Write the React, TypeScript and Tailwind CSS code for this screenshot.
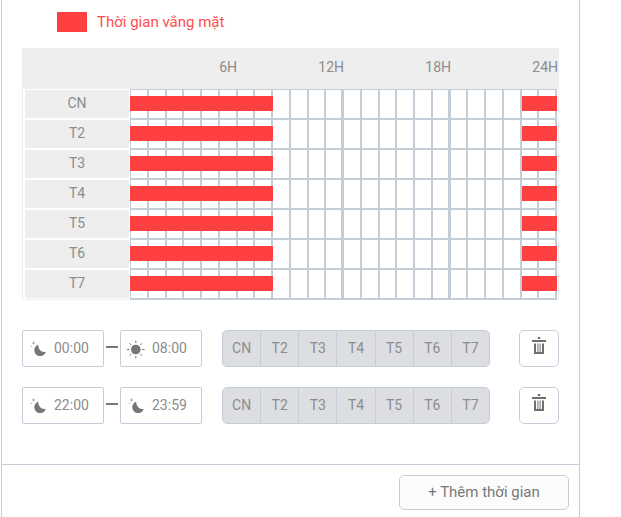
import React from 'react';

const days = ['CN', 'T2', 'T3', 'T4', 'T5', 'T6', 'T7'];
const hours = Array.from({ length: 24 }, (_, i) => i + 1);

const MoonIcon: React.FC = () => (
  <svg width="20" height="20" viewBox="0 0 20 20" className="shrink-0">
    <path d="M8.3 5.6a5.9 5.9 0 1 0 7.5 7.4 6.6 6.6 0 0 1-7.5-7.4z" fill="#777" />
    <path d="M3.5 2.6v2.8M2.1 4h2.8M0.8 7.5h1.2" stroke="#999" strokeWidth="0.8" fill="none" />
  </svg>
);

const SunIcon: React.FC = () => (
  <svg width="20" height="20" viewBox="0 0 20 20" className="shrink-0 overflow-visible">
    <circle cx="7.8" cy="10.5" r="4.8" fill="#777" />
    <path
      d="M7.8 1.6v2.4M7.8 17v2.4M-1 10.5h2.4M14.2 10.5h2.4M1.6 4.3l1.7 1.7M12.3 15l1.7 1.7M1.6 16.7l1.7-1.7M12.3 6l1.7-1.7"
      stroke="#777"
      strokeWidth="1"
      fill="none"
    />
  </svg>
);

const TrashIcon: React.FC = () => (
  <svg width="14" height="17" viewBox="0 0 14 17" className="mb-[7px]">
    <rect x="5.8" y="0" width="2.4" height="2" fill="#6f6f6f" />
    <rect x="0" y="3" width="14" height="2" fill="#6f6f6f" />
    <path d="M2 6.5h10V17H2zM4 6.5V15h1.4V6.5zM6.4 6.5V15h1.2V6.5zM8.6 6.5V15H10V6.5z" fill="#6f6f6f" fillRule="evenodd" />
  </svg>
);

const TimeBox: React.FC<{ icon: React.ReactNode; value: string }> = ({ icon, value }) => (
  <div className="w-[82px] h-[37px] flex items-center pl-[7px] gap-[4px] border border-[#c5ced8] rounded-[2px] text-sm text-[#8c8c8c]">
    {icon}
    <span className="pb-[2px]">{value}</span>
  </div>
);

const ScheduleRow: React.FC<{ from: React.ReactNode; fromValue: string; to: React.ReactNode; toValue: string }> = ({
  from,
  fromValue,
  to,
  toValue,
}) => (
  <div className="flex items-center">
    <TimeBox icon={from} value={fromValue} />
    <div className="w-[12px] h-[2px] bg-[#777] mx-[2px] mb-[3px]" />
    <TimeBox icon={to} value={toValue} />
    <div className="ml-[20px] w-[268px] h-[37px] flex bg-[#dcdee2] border border-[#c5ced8] rounded-[5px] text-sm text-[#8c8c8c]">
      {days.map((d, i) => (
        <div
          key={d}
          className={`flex-1 flex items-center justify-center pb-[2px] ${i < 6 ? 'border-r border-[#c5ced8]' : ''}`}
        >
          {d}
        </div>
      ))}
    </div>
    <button className="ml-[29px] w-[40px] h-[37px] flex items-center justify-center border border-[#c5ced8] rounded-[5px] bg-white">
      <TrashIcon />
    </button>
  </div>
);

export default function App() {
  return (
    <div className="w-[621px] h-[517px] bg-white overflow-hidden font-['Roboto',sans-serif]">
      <div className="w-[579px] h-full ml-px border-x border-[#c5ced8] flex flex-col">
        <div className="flex items-center h-[20px] mt-[12px] ml-[55px] gap-[10px]">
          <div className="w-[30px] h-[20px] bg-[#ff4040]" />
          <span className="text-[15px] text-[#ff4d4d]">Thời gian vắng mặt</span>
        </div>

        <div className="mt-[16px] ml-[20px] w-[537px] h-[252px] border-x border-b border-[#eeeeee]">
          <div className="h-[41px] bg-[#eeeeee] -mx-px relative text-sm text-[#8c8c8c]">
            <span className="absolute right-[322px] top-[9px]">6H</span>
            <span className="absolute right-[215px] top-[9px]">12H</span>
            <span className="absolute right-[108px] top-[9px]">18H</span>
            <span className="absolute right-[1px] top-[9px]">24H</span>
          </div>
          <div className="ml-[107px] w-[427px] h-px bg-[#c5ced8]" />
          {days.map((d) => (
            <div key={d} className="flex h-[30px]">
              <div className="ml-[2px] w-[104px] h-[28px] pb-[2px] bg-[#eeeeee] flex items-center justify-center text-sm text-[#8c8c8c]">
                {d}
              </div>
              <div className="ml-px w-[427px] relative grid grid-cols-[repeat(24,1fr)] border-l border-[#c5ced8]">
                {hours.map((h) => (
                  <div
                    key={h}
                    className={`border-b-2 border-[#c5ced8] ${
                      h === 12 || h === 18 ? 'border-r-[3px]' : 'border-r-2'
                    }`}
                  />
                ))}
                <div className="absolute -left-px top-[6px] w-[143px] h-[15px] bg-[#ff4040]" />
                <div className="absolute right-0 top-[6px] w-[35px] h-[15px] bg-[#ff4040]" />
              </div>
            </div>
          ))}
        </div>

        <div className="mt-[30px] ml-[20px] flex flex-col gap-[20px]">
          <ScheduleRow from={<MoonIcon />} fromValue="00:00" to={<SunIcon />} toValue="08:00" />
          <ScheduleRow from={<MoonIcon />} fromValue="22:00" to={<MoonIcon />} toValue="23:59" />
        </div>

        <div className="mt-[40px] border-t border-[#c5ced8] pt-[10px] flex justify-end pr-[10px]">
          <button className="w-[170px] h-[35px] border border-[#c5ced8] rounded-[5px] bg-[#fcfcfc] text-[15px] text-[#777]">
            + Thêm thời gian
          </button>
        </div>
      </div>
    </div>
  );
}
